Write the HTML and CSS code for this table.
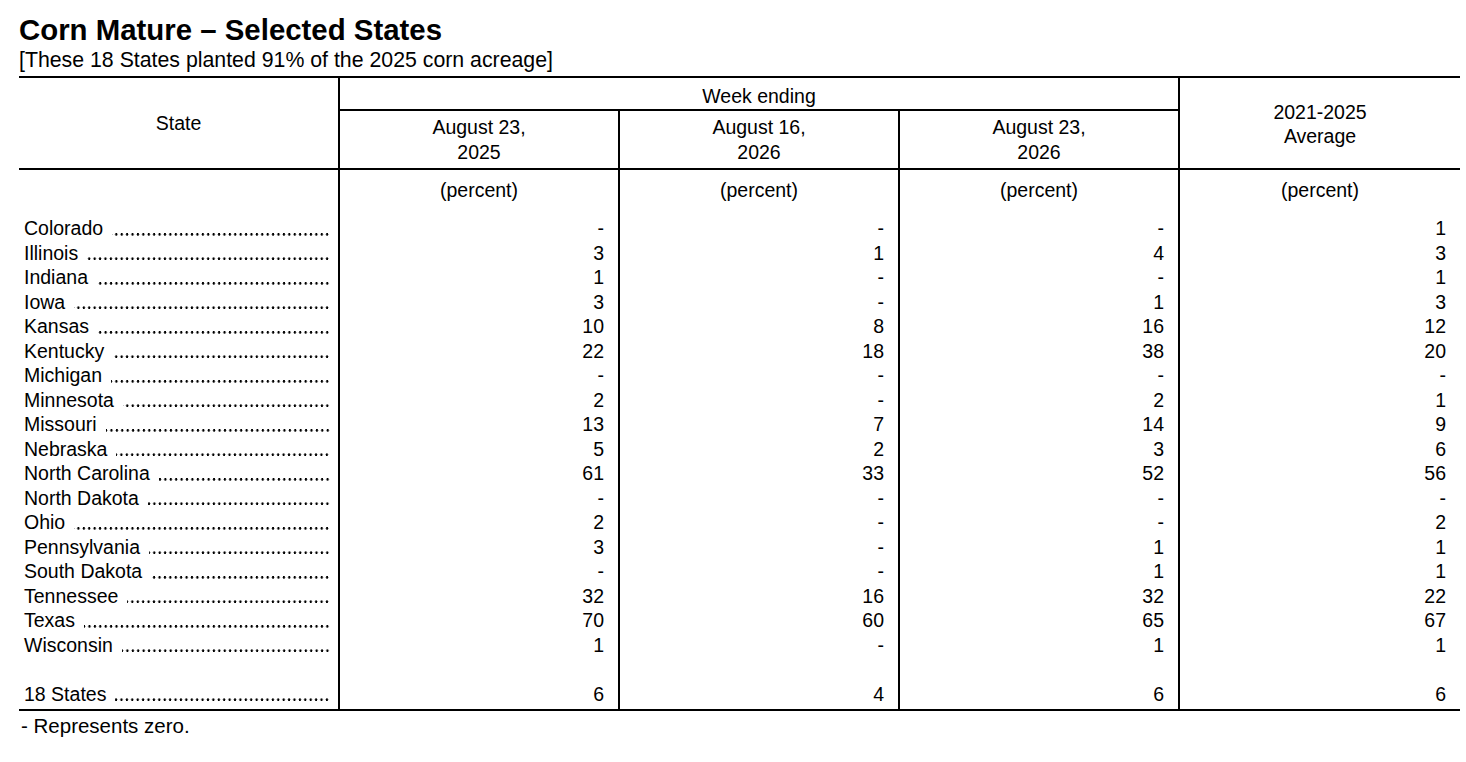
FILE: index.html
```html
<!DOCTYPE html>
<html lang="en">
<head>
<meta charset="utf-8">
<title>Corn Mature – Selected States</title>
<link rel="stylesheet" href="styles.css">
</head>
<body>
<div class="page">
  <h1 class="title">Corn Mature – Selected States</h1>
  <p class="subtitle">[These 18 States planted 91% of the 2025 corn acreage]</p>
  <table class="report">
    <colgroup>
      <col class="c-state">
      <col class="c-num">
      <col class="c-num">
      <col class="c-num">
      <col class="c-last">
    </colgroup>
    <thead>
      <tr>
        <th rowspan="2" class="h-state">State</th>
        <th colspan="3" class="h-week vl">Week ending</th>
        <th rowspan="2" class="h-avg vl">2021-2025<br>Average</th>
      </tr>
      <tr>
        <th class="h-date vl">August 23,<br>2025</th>
        <th class="h-date vl">August 16,<br>2026</th>
        <th class="h-date vl">August 23,<br>2026</th>
      </tr>
    </thead>
    <tbody>
      <tr class="unit-row">
        <td></td>
        <td class="vl unit">(percent)</td>
        <td class="vl unit">(percent)</td>
        <td class="vl unit">(percent)</td>
        <td class="vl unit">(percent)</td>
      </tr>
      <tr><td class="st"><div class="leader"><span class="nm">Colorado</span><span class="dots"></span></div></td><td class="vl n">-</td><td class="vl n">-</td><td class="vl n">-</td><td class="vl n">1</td></tr>
      <tr><td class="st"><div class="leader"><span class="nm">Illinois</span><span class="dots"></span></div></td><td class="vl n">3</td><td class="vl n">1</td><td class="vl n">4</td><td class="vl n">3</td></tr>
      <tr><td class="st"><div class="leader"><span class="nm">Indiana</span><span class="dots"></span></div></td><td class="vl n">1</td><td class="vl n">-</td><td class="vl n">-</td><td class="vl n">1</td></tr>
      <tr><td class="st"><div class="leader"><span class="nm">Iowa</span><span class="dots"></span></div></td><td class="vl n">3</td><td class="vl n">-</td><td class="vl n">1</td><td class="vl n">3</td></tr>
      <tr><td class="st"><div class="leader"><span class="nm">Kansas</span><span class="dots"></span></div></td><td class="vl n">10</td><td class="vl n">8</td><td class="vl n">16</td><td class="vl n">12</td></tr>
      <tr><td class="st"><div class="leader"><span class="nm">Kentucky</span><span class="dots"></span></div></td><td class="vl n">22</td><td class="vl n">18</td><td class="vl n">38</td><td class="vl n">20</td></tr>
      <tr><td class="st"><div class="leader"><span class="nm">Michigan</span><span class="dots"></span></div></td><td class="vl n">-</td><td class="vl n">-</td><td class="vl n">-</td><td class="vl n">-</td></tr>
      <tr><td class="st"><div class="leader"><span class="nm">Minnesota</span><span class="dots"></span></div></td><td class="vl n">2</td><td class="vl n">-</td><td class="vl n">2</td><td class="vl n">1</td></tr>
      <tr><td class="st"><div class="leader"><span class="nm">Missouri</span><span class="dots"></span></div></td><td class="vl n">13</td><td class="vl n">7</td><td class="vl n">14</td><td class="vl n">9</td></tr>
      <tr><td class="st"><div class="leader"><span class="nm">Nebraska</span><span class="dots"></span></div></td><td class="vl n">5</td><td class="vl n">2</td><td class="vl n">3</td><td class="vl n">6</td></tr>
      <tr><td class="st"><div class="leader"><span class="nm">North Carolina</span><span class="dots"></span></div></td><td class="vl n">61</td><td class="vl n">33</td><td class="vl n">52</td><td class="vl n">56</td></tr>
      <tr><td class="st"><div class="leader"><span class="nm">North Dakota</span><span class="dots"></span></div></td><td class="vl n">-</td><td class="vl n">-</td><td class="vl n">-</td><td class="vl n">-</td></tr>
      <tr><td class="st"><div class="leader"><span class="nm">Ohio</span><span class="dots"></span></div></td><td class="vl n">2</td><td class="vl n">-</td><td class="vl n">-</td><td class="vl n">2</td></tr>
      <tr><td class="st"><div class="leader"><span class="nm">Pennsylvania</span><span class="dots"></span></div></td><td class="vl n">3</td><td class="vl n">-</td><td class="vl n">1</td><td class="vl n">1</td></tr>
      <tr><td class="st"><div class="leader"><span class="nm">South Dakota</span><span class="dots"></span></div></td><td class="vl n">-</td><td class="vl n">-</td><td class="vl n">1</td><td class="vl n">1</td></tr>
      <tr><td class="st"><div class="leader"><span class="nm">Tennessee</span><span class="dots"></span></div></td><td class="vl n">32</td><td class="vl n">16</td><td class="vl n">32</td><td class="vl n">22</td></tr>
      <tr><td class="st"><div class="leader"><span class="nm">Texas</span><span class="dots"></span></div></td><td class="vl n">70</td><td class="vl n">60</td><td class="vl n">65</td><td class="vl n">67</td></tr>
      <tr><td class="st"><div class="leader"><span class="nm">Wisconsin</span><span class="dots"></span></div></td><td class="vl n">1</td><td class="vl n">-</td><td class="vl n">1</td><td class="vl n">1</td></tr>
      <tr class="blank"><td>&nbsp;</td><td class="vl"></td><td class="vl"></td><td class="vl"></td><td class="vl"></td></tr>
      <tr class="total"><td class="st"><div class="leader"><span class="nm">18 States</span><span class="dots"></span></div></td><td class="vl n">6</td><td class="vl n">4</td><td class="vl n">6</td><td class="vl n">6</td></tr>
    </tbody>
  </table>
  <p class="note">- Represents zero.</p>
</div>
</body>
</html>
```

FILE: styles.css
```css
html, body {
  margin: 0;
  padding: 0;
  background: #ffffff;
}

body {
  color: #000000;
  font-family: "Liberation Sans", Arial, sans-serif;
  font-size: 19.5px;
}

.page {
  padding: 14px 0 0 19px;
}

.title {
  margin: 0;
  font-size: 29.4px;
  line-height: 32px;
  font-weight: bold;
}

.subtitle {
  margin: 2px 0 0 0;
  font-size: 21.3px;
  line-height: 24px;
}

.report {
  margin-top: 4px;
  width: 1441px;
  table-layout: fixed;
  border-collapse: separate;
  border-spacing: 0;
  font-size: 19.5px;
  line-height: 24.5px;
}

.report th,
.report td {
  box-sizing: border-box;
  padding: 0;
}

.c-state { width: 319px; }
.c-num { width: 280px; }
.c-last { width: 282px; }

.report thead th {
  font-weight: normal;
  text-align: center;
  vertical-align: middle;
}

.report thead tr:first-child th {
  border-top: 2px solid #000;
}

.report .h-state {
  border-bottom: 2px solid #000;
  height: 94px;
  padding-top: 1px;
}

.report .h-week {
  height: 34px;
  padding-top: 6px;
  border-bottom: 2px solid #000;
  vertical-align: top;
}

.report .h-avg {
  border-bottom: 2px solid #000;
  padding-top: 1px;
  line-height: 24px;
}

.report .h-date {
  height: 58px;
  border-bottom: 2px solid #000;
}

.report .vl {
  border-left: 2px solid #000;
}

.report .unit-row td {
  height: 46px;
  padding-top: 8px;
  vertical-align: top;
}

.report .unit {
  text-align: center;
}

.report .st {
  padding: 0 8px 0 5px;
  height: 24.5px;
}

.leader {
  display: flex;
  white-space: nowrap;
}

.leader .nm {
  flex: none;
  padding-right: 9px;
}

.leader .dots {
  flex: 1 1 auto;
  min-width: 0;
  height: 24.5px;
  background-image: radial-gradient(circle at 50% 18px, #000 1.05px, rgba(0, 0, 0, 0) 1.5px);
  background-size: 5.42px 24.5px;
  background-repeat: repeat-x;
  background-position: right top;
}

.report .n {
  height: 24.5px;
  text-align: right;
  padding-right: 14px;
}

.report .blank td {
  height: 24.5px;
}

.report .total td {
  border-bottom: 2px solid #000;
  padding-bottom: 2.5px;
  height: 29px;
}

.note {
  margin: 3px 0 0 2px;
  font-size: 20.5px;
  line-height: 24.5px;
}
```
